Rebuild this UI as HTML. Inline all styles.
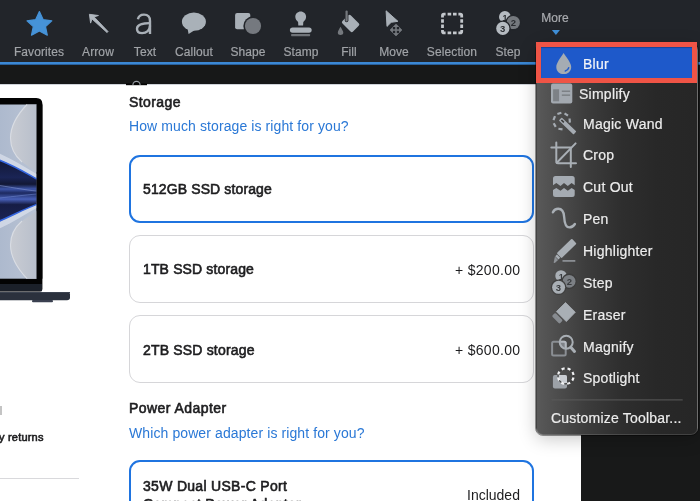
<!DOCTYPE html>
<html><head><meta charset="utf-8">
<style>
*{margin:0;padding:0;box-sizing:border-box}
html,body{width:700px;height:501px;overflow:hidden;background:#181919;font-family:"Liberation Sans",sans-serif;position:relative}
.abs{position:absolute}
.lbl,.t,.mi,svg{will-change:transform}
#toolbar{left:0;top:0;width:700px;height:62px;background:#22252a}
#blueline{left:0;top:62px;width:700px;height:3px;background:linear-gradient(#3b88d4 0,#3b88d4 2px,#29609a 2px,#29609a 3px)}
#strip{left:0;top:65px;width:700px;height:19px;background:#171818}
#page{left:0;top:84px;width:581px;height:417px;background:#fff;overflow:hidden}
.lbl{position:absolute;top:45.5px;font-size:12px;line-height:12px;color:#a0a3a7;letter-spacing:0.1px;white-space:nowrap;transform:translateX(-50%);-webkit-text-stroke:0.2px currentColor}
.t{position:absolute;white-space:nowrap;font-size:14px;line-height:14px;color:#1d1d1f}
.b{font-weight:normal;-webkit-text-stroke:0.6px currentColor}
.lnk{color:#2a78d6;letter-spacing:0.1px}
.card{position:absolute;left:129px;width:405px;height:68px;border:1px solid #d6d6d9;border-radius:11px;background:#fff}
.card.sel{border:2px solid #1f74e0}
#menu{left:536px;top:42.5px;width:162px;height:392.5px;border-radius:7px;background:linear-gradient(to right,#595959 0px,#4d4d4d 20px,#3c3c3c 50px,#2e2e2e 85px,#282828 120px,#262626 162px);box-shadow:0 4px 18px rgba(0,0,0,.22);border:1px solid rgba(255,255,255,.13);outline:0.5px solid rgba(0,0,0,.4)}
.mi{position:absolute;left:583px;font-size:14px;line-height:14px;color:#ececec;white-space:nowrap;letter-spacing:0.25px;-webkit-text-stroke:0.2px currentColor}
</style></head><body>
<div id="toolbar" class="abs"></div>
<div id="blueline" class="abs"></div>
<div id="strip" class="abs"></div>

<!-- toolbar icons -->
<svg class="abs" style="left:0;top:0" width="700" height="62" viewBox="0 0 700 62">
  <!-- star -->
  <polygon fill="#4693d8" stroke="#4693d8" stroke-width="1.2" stroke-linejoin="round" points="39.4,11.6 43.2,19.7 51.8,20.8 45.5,26.6 47.3,35.2 39.4,31 31.5,35.2 33.3,26.6 27,20.8 35.6,19.7"/>
  <!-- arrow -->
  <path d="M89.4,14.3 L98.45,15.5 L94.1,16.9 L108,31.5 L107.1,32.6 L92,19 L90.6,23.1 Z" fill="#b1b8bf" stroke="#b1b8bf" stroke-width="0.9" stroke-linejoin="round"/>
  <!-- text a -->
  <g fill="none" stroke="#a9b0b7" stroke-width="2.4">
    <path d="M137.9,19.3 C138.6,15.6 141.1,14.6 144,14.6 C147.8,14.6 150,16.7 150,20.9 L150,34"/>
    <path d="M150,23.1 C145.5,23.3 137,23.4 137,28.7 C137,31.7 139.2,33.1 142.1,33.1 C146.6,33.1 150,30 150,25.8"/>
  </g>
  <!-- callout -->
  <g fill="#a9b1b8">
    <ellipse cx="193.9" cy="21.7" rx="12" ry="9.1"/>
    <path d="M187.5,28.5 L188.6,34 L194.5,30.2 Z"/>
  </g>
  <!-- shape -->
  <rect x="235.1" y="12.9" width="15.2" height="16.3" rx="2" fill="#a9b0b7"/>
  <circle cx="253" cy="26" r="9.7" fill="#22252a"/>
  <circle cx="253" cy="26" r="8.1" fill="#75797f"/>
  <!-- stamp -->
  <g fill="#a9b0b7">
    <path d="M300.7,11.4 C303.7,11.4 306.1,13.8 306.1,16.8 C306.1,19 304.9,20.6 303.3,21.9 L303.1,25.4 L298.3,25.4 L298.1,21.9 C296.5,20.6 295.3,19 295.3,16.8 C295.3,13.8 297.7,11.4 300.7,11.4 Z"/>
    <rect x="289.9" y="27.4" width="21.8" height="5.4" rx="2.7"/>
  </g>
  <rect x="291.1" y="33.9" width="19" height="2.3" rx="0.6" fill="#6f7378"/>
  <!-- fill -->
  <g transform="translate(350.6,23.4) rotate(44.7)">
    <rect x="-7.45" y="-5.85" width="14.9" height="11.7" rx="1.8" fill="#a9b0b7"/>
  </g>
  <path d="M346.6,11.6 L346.6,20.4" stroke="#22252a" stroke-width="3.6" stroke-linecap="round" fill="none"/>
  <path d="M346.6,11.6 L346.6,20.4" stroke="#74787d" stroke-width="2.2" stroke-linecap="round" fill="none"/>
  <path d="M340.5,26.8 C339.4,29 337.8,31 337.8,32.8 C337.8,34.2 339,35 340.5,35 C342,35 343.3,34.2 343.3,32.8 C343.3,31 341.6,29 340.5,26.8 Z" fill="#75797e"/>
  <!-- move -->
  <path d="M386.1,10.8 L397.9,21.3 L391.2,22.3 L387,26.4 Z" fill="#a9b0b7" stroke="#a9b0b7" stroke-width="1" stroke-linejoin="round"/>
  <path d="M396,23.3 L402.6,30 L396,36.6 L389.4,30 Z" fill="#22252a"/>
  <path d="M396,23.9 L402,30 L396,36 L390,30 Z" fill="#75797e" stroke="#75797e" stroke-width="0.6" stroke-linejoin="round"/>
  <g fill="#22252a">
    <rect x="392.9" y="27" width="2.3" height="2.3"/>
    <rect x="396.8" y="27" width="2.3" height="2.3"/>
    <rect x="392.9" y="30.8" width="2.3" height="2.3"/>
    <rect x="396.8" y="30.8" width="2.3" height="2.3"/>
  </g>
  <!-- selection -->
  <g fill="none" stroke="#c3c7cc" stroke-width="2.8">
    <path d="M442.5,17.6 L442.5,15.6 Q442.5,14.2 443.9,14.2 L445.6,14.2"/>
    <path d="M458.4,14.2 L460.3,14.2 Q461.7,14.2 461.7,15.6 L461.7,17.6"/>
    <path d="M442.5,30 L442.5,31.4 Q442.5,32.8 443.9,32.8 L445.6,32.8"/>
    <path d="M458.4,32.8 L460.3,32.8 Q461.7,32.8 461.7,31.4 L461.7,30"/>
    <path d="M447.6,14.2 L451.2,14.2 M453,14.2 L456.6,14.2"/>
    <path d="M447.6,32.8 L451.2,32.8 M453,32.8 L456.6,32.8"/>
    <path d="M442.5,19.3 L442.5,22.7 M442.5,24.5 L442.5,28.1"/>
    <path d="M461.7,19.3 L461.7,22.7 M461.7,24.5 L461.7,28.1"/>
  </g>
  <!-- step -->
  <circle cx="504.9" cy="16.9" r="5.9" fill="#b5bbc1"/>
  <text x="505.1" y="21.2" font-size="9" font-family="Liberation Sans" font-weight="bold" fill="#2a2d31" text-anchor="middle">1</text>
  <circle cx="513.3" cy="22.5" r="7.9" fill="#22252a"/>
  <circle cx="513.3" cy="22.5" r="6.6" fill="#75797e"/>
  <circle cx="502.8" cy="28.4" r="7.9" fill="#22252a"/>
  <circle cx="502.8" cy="28.4" r="6.6" fill="#b5bbc1"/>
  <g font-family="Liberation Sans" font-weight="bold" fill="#2a2d31" text-anchor="middle">
    <text x="513.5" y="26" font-size="9.5">2</text>
    <text x="502.6" y="31.8" font-size="9.5">3</text>
  </g>
  <!-- more triangle -->
  <path d="M551.9,30 L559.9,30 L555.9,35 Z" fill="#3f8fd8"/>
</svg>

<div class="lbl" style="left:39.3px">Favorites</div>
<div class="lbl" style="left:98px">Arrow</div>
<div class="lbl" style="left:144.7px">Text</div>
<div class="lbl" style="left:193.8px">Callout</div>
<div class="lbl" style="left:247.8px">Shape</div>
<div class="lbl" style="left:300.5px">Stamp</div>
<div class="lbl" style="left:348.5px">Fill</div>
<div class="lbl" style="left:393.7px">Move</div>
<div class="lbl" style="left:452px">Selection</div>
<div class="lbl" style="left:508.4px">Step</div>
<div class="lbl" style="left:555.4px;top:11.7px;color:#a9abaf">More</div>

<!-- page -->
<div id="page" class="abs"></div>
<div class="abs" style="left:0;top:84px;width:581px;height:1px;background:#cfd3d9"></div>
<svg class="abs" style="left:120px;top:76px" width="35" height="12" viewBox="120 76 35 12">
  <rect x="126" y="83.4" width="21" height="1.8" fill="#050505"/>
  <path d="M132.9,85 A3.6,3.6 0 0 1 140.1,85" fill="#050505" stroke="#9ba1a8" stroke-width="1.1"/>
</svg>

<!-- laptop -->
<svg class="abs" style="left:0;top:84px" width="100" height="230" viewBox="0 84 100 230">
  <defs>
    <linearGradient id="scrL" x1="0" y1="0" x2="1" y2="0">
      <stop offset="0" stop-color="#aab7cc"/>
      <stop offset="1" stop-color="#b9c3d4"/>
    </linearGradient>
    <linearGradient id="scrR" x1="0" y1="0" x2="1" y2="0">
      <stop offset="0" stop-color="#c9ccd3"/>
      <stop offset="1" stop-color="#b8bfcb"/>
    </linearGradient>
    <linearGradient id="navy" x1="0" y1="0" x2="0" y2="1">
      <stop offset="0" stop-color="#2d5bd0"/>
      <stop offset="0.07" stop-color="#131938"/>
      <stop offset="0.3" stop-color="#1a2455"/>
      <stop offset="0.4" stop-color="#121835"/>
      <stop offset="0.47" stop-color="#3d55a8"/>
      <stop offset="0.53" stop-color="#1d2a60"/>
      <stop offset="0.62" stop-color="#4860b8"/>
      <stop offset="0.7" stop-color="#161d45"/>
      <stop offset="0.9" stop-color="#1a2250"/>
      <stop offset="1" stop-color="#2d5bd0"/>
    </linearGradient>
  </defs>
  <path d="M-10,98 L36.3,98 Q42.4,98 42.4,104.1 L42.4,289 Q42.4,291.5 40,291.5 L-10,291.5 Z" fill="#030303"/>
  <rect x="-10" y="104.5" width="46.6" height="174.2" fill="url(#scrL)"/>
  <path d="M27,104.5 C16,116 10.5,126 10.5,138 C10.5,148 15,156 22,162 L36.6,172 L36.6,104.5 Z" fill="url(#scrR)"/>
  <path d="M27,278.7 C16,267 10.5,257 10.5,245 C10.5,235 15,227 22,221 L36.6,211 L36.6,278.7 Z" fill="url(#scrR)"/>
  <path d="M27,104.5 C16,116 10.5,126 10.5,138 C10.5,148 15,156 22,162" stroke="#e2e4ea" stroke-width="1.1" fill="none" opacity="0.75"/>
  <path d="M27,278.7 C16,267 10.5,257 10.5,245 C10.5,235 15,227 22,221" stroke="#e2e4ea" stroke-width="1.1" fill="none" opacity="0.75"/>
  <path d="M-10,150 C8,156 22,166 36.6,174 L36.6,180 C22,172 8,162 -10,157 Z" fill="#dde2ee" opacity="0.7"/>
  <path d="M-10,232 C8,226 22,216 36.6,208 L36.6,202 C22,210 8,220 -10,225 Z" fill="#dde2ee" opacity="0.7"/>
  <path d="M-10,157 C8,162 24,172 36.6,179 L36.6,204.4 C24,209 8,218 -10,225 Z" fill="url(#navy)"/>
  <path d="M-10,157 C8,162 24,172 36.6,179" stroke="#3466e0" stroke-width="1.5" fill="none"/>
  <path d="M-10,225 C8,218 24,209 36.6,204.4" stroke="#3466e0" stroke-width="1.5" fill="none"/>
  <path d="M-10,184 C10,187 25,190 36.6,191" stroke="#8a9cd8" stroke-width="0.8" fill="none" opacity="0.7"/>
  <path d="M-10,199 C10,197 25,195 36.6,194" stroke="#6f86d0" stroke-width="0.8" fill="none" opacity="0.7"/>
  <rect x="36.6" y="104.5" width="5.8" height="174.2" fill="#030303"/>
  <rect x="-10" y="284" width="52" height="7.2" fill="#1b2029"/>
  <path d="M-10,292 L67.5,292 Q70,292 70,294.5 L70,297.5 Q70,300.3 67,300.3 L-10,300.3 Z" fill="#2b313d"/>
  <rect x="-10" y="292" width="80" height="1" fill="#3c4350"/>
  <rect x="32" y="300" width="21" height="2.2" rx="1" fill="#3a4050"/>
</svg>

<div class="abs" style="left:0;top:406px;width:1.5px;height:9px;background:#c4c4c4"></div>
<div class="t b" style="left:-1.5px;top:431.8px;font-size:11px;line-height:11px;letter-spacing:0.2px">y returns</div>
<div class="abs" style="left:0;top:478px;width:79px;height:1px;background:#d9d9dc"></div>

<div class="t b" style="left:129px;top:95.05px;letter-spacing:0.4px">Storage</div>
<div class="t lnk" style="left:129px;top:119.05px">How much storage is right for you?</div>

<div class="card sel" style="top:154.5px"></div>
<div class="t b" style="left:143px;top:182.25px;letter-spacing:0.12px">512GB SSD storage</div>

<div class="card" style="top:235px"></div>
<div class="t b" style="left:143px;top:262.35px;letter-spacing:0.14px">1TB SSD storage</div>
<div class="t" style="left:455px;top:262.85px;letter-spacing:0.3px">+ $200.00</div>

<div class="card" style="top:315px"></div>
<div class="t b" style="left:143px;top:342.95px;letter-spacing:0.18px">2TB SSD storage</div>
<div class="t" style="left:455px;top:342.65px;letter-spacing:0.3px">+ $600.00</div>

<div class="t b" style="left:129px;top:401.15px;letter-spacing:0.45px">Power Adapter</div>
<div class="t lnk" style="left:129px;top:425.75px">Which power adapter is right for you?</div>

<div class="card sel" style="top:459.6px;height:80px"></div>
<div class="t b" style="left:143px;top:479.3px;letter-spacing:0.3px">35W Dual USB-C Port</div>
<div class="t b" style="left:143px;top:496.5px;letter-spacing:0.3px">Compact Power Adapter</div>
<div class="t" style="left:466.5px;top:487.75px">Included</div>

<!-- menu -->
<div id="menu" class="abs"></div>
<div class="abs" style="left:536.2px;top:41.6px;width:160.5px;height:41.2px;border:5px solid #ef5446;background:#1e59ca;box-shadow:inset 0 1px 1px rgba(0,0,0,.25)"></div>

<svg class="abs" style="left:536px;top:41px" width="164" height="400" viewBox="536 41 164 400">
  <!-- blur drop -->
  <path d="M563.6,52.9 C560.8,57.5 556.3,62.6 556.3,66.9 C556.3,71.1 559.5,74.1 563.7,74.1 C567.9,74.1 571.2,71.1 571.2,66.9 C571.2,62.6 566.4,57.5 563.6,52.9 Z" fill="#a5acb3"/>
  <path d="M565.3,71 C566.9,70.6 568.3,69.3 568.7,67.8" stroke="#1f5bcc" stroke-width="1.4" stroke-linecap="round" fill="none"/>
  <!-- simplify -->
  <rect x="551" y="83.6" width="21.3" height="19.8" rx="2" fill="#a3a9b0"/>
  <rect x="553.1" y="89.3" width="6" height="12" fill="#7d8186"/>
  <rect x="561.8" y="90.5" width="8.3" height="1.5" fill="#7d8186"/>
  <rect x="561.8" y="94.4" width="8.3" height="1.5" fill="#7d8186"/>
  <!-- magic wand -->
  <path d="M569.57,118.47 L569.86,122.61 M562.52,129.36 L558.41,128.72 M555.75,126.89 L553.69,123.28 M553.47,120.06 L555.00,116.20 M557.38,114.01 L561.36,112.81 M564.55,113.30 L567.97,115.66" stroke="#a5abb2" stroke-width="2.2" fill="none"/>
  <g transform="translate(567.6,126) rotate(43.8)">
    <rect x="-10.2" y="-2.1" width="20.4" height="4.2" rx="0.8" fill="#a5abb2"/>
    <rect x="-8.6" y="-0.8" width="3.4" height="1.6" fill="#3a3a3a"/>
  </g>
  <!-- crop -->
  <g stroke="#a9afb5" stroke-width="2" fill="none" stroke-linecap="round" stroke-linejoin="round">
    <path d="M556.3,142.6 L556.3,161.6 Q556.3,163.3 558,163.3 L576,163.3"/>
    <path d="M551.3,147.5 L570.8,147.5 L570.8,167"/>
    <path d="M556.8,162.8 L575.6,143.4"/>
  </g>
  <!-- cut out -->
  <path d="M555.5,176.1 L572.2,176.1 Q574.7,176.1 574.7,178.6 L574.7,185.3 L571.6,183.1 L567.8,186 L564,183.1 L560.5,186 L556.3,183.1 L553,185.3 L553,178.6 Q553,176.1 555.5,176.1 Z" fill="#a5abb2"/>
  <path d="M553,190.1 L556.3,187.9 L560.5,190.8 L564,187.9 L567.8,190.8 L571.6,187.9 L574.7,190.1 L574.7,194.6 Q574.7,197.1 572.2,197.1 L555.5,197.1 Q553,197.1 553,194.6 Z" fill="#a5abb2"/>
  <!-- pen -->
  <path d="M552.9,212.3 C554,210 556,208.8 558.2,208.8 C562.2,208.8 563.9,212.2 564.2,217.2 C564.5,223 566.2,227.4 569.3,227.4 C571.6,227.4 573.6,226 574.9,224" stroke="#a9afb5" stroke-width="2.4" fill="none" stroke-linecap="round"/>
  <!-- highlighter -->
  <g transform="translate(566.6,248.5) rotate(-44)">
    <rect x="-10.4" y="-3.5" width="21" height="7" rx="1" fill="#a9afb5"/>
    <rect x="-13.6" y="-2.3" width="2.5" height="4.6" fill="#a9afb5"/>
    <path d="M-14,-2.3 L-19.2,1.2 L-18.6,2.3 L-14,2.3 Z" fill="#8e9297"/>
  </g>
  <rect x="562.5" y="260" width="12.8" height="1.8" fill="#8a8e93"/>
    <!-- step -->
  <circle cx="561" cy="275.9" r="5.7" fill="#a9afb5"/>
  <text x="561.2" y="280" font-size="9" font-family="Liberation Sans" font-weight="bold" fill="#3a3c3f" text-anchor="middle">1</text>
  <circle cx="569.1" cy="281.3" r="7.7" fill="#3d3d3d"/>
  <circle cx="569.1" cy="281.3" r="6.4" fill="#7c8085"/>
  <circle cx="558.6" cy="287.3" r="7.8" fill="#3f3f3f"/>
  <circle cx="558.6" cy="287.3" r="6.5" fill="#a9afb5"/>
  <g font-family="Liberation Sans" font-weight="bold" fill="#3a3c3f" text-anchor="middle">
    <text x="569.3" y="284.6" font-size="9.5">2</text>
    <text x="558.4" y="290.7" font-size="9.5">3</text>
  </g>
  <!-- eraser -->
  <path d="M565.5,302.5 L575.3,312.2 L566.3,321.6 L556.4,311.6 Z" fill="#a9afb5" stroke="#a9afb5" stroke-width="0.8" stroke-linejoin="round"/>
  <g transform="translate(556.2,311.5) rotate(45)">
    <rect x="0.2" y="1.6" width="10.8" height="4.8" rx="1.2" fill="#878b90"/>
  </g>
  <!-- magnify -->
  <defs><clipPath id="mgc"><circle cx="566.2" cy="342.2" r="6"/></clipPath></defs>
  <rect x="552.1" y="341.8" width="13.6" height="13.8" rx="1.5" fill="none" stroke="#8a8e93" stroke-width="2"/>
  <g clip-path="url(#mgc)">
    <rect x="552.1" y="341.8" width="13.6" height="13.8" rx="1.5" fill="#7f8388" stroke="#b3b8be" stroke-width="2"/>
  </g>
  <circle cx="566.2" cy="342.2" r="6.5" fill="none" stroke="#a9afb5" stroke-width="2"/>
  <path d="M571,347.4 L574.5,351.4" stroke="#a9afb5" stroke-width="3" stroke-linecap="round"/>
  <!-- spotlight -->
  <defs><clipPath id="spc"><circle cx="565.8" cy="376.1" r="7.8"/></clipPath></defs>
  <rect x="552.9" y="374.9" width="14.1" height="13.7" rx="2" fill="#9ca1a7"/>
  <rect x="552.9" y="374.9" width="14.1" height="13.7" rx="2" fill="#c9cdd2" clip-path="url(#spc)"/>
  <circle cx="565.8" cy="376.1" r="7.8" fill="none" stroke="#3a3a3a" stroke-width="1.2"/>
  <circle cx="565.8" cy="376.1" r="7.8" fill="none" stroke="#f0f1f3" stroke-width="2.2" stroke-dasharray="3.2 2.93" stroke-dashoffset="4.66"/>
  <!-- separator -->
  <rect x="551.4" y="399.4" width="131.3" height="1" fill="#5a5a5a"/>
</svg>

<div class="mi" style="top:56.75px;color:#f2f4f8">Blur</div>
<div class="mi" style="left:579px;top:86.85px">Simplify</div>
<div class="mi" style="top:116.75px">Magic Wand</div>
<div class="mi" style="top:148.35px">Crop</div>
<div class="mi" style="top:180.05px">Cut Out</div>
<div class="mi" style="top:212.15px">Pen</div>
<div class="mi" style="top:243.75px">Highlighter</div>
<div class="mi" style="top:276.15px">Step</div>
<div class="mi" style="top:307.65px">Eraser</div>
<div class="mi" style="top:339.65px">Magnify</div>
<div class="mi" style="top:371.15px">Spotlight</div>
<div class="mi" style="left:551px;top:411.35px;letter-spacing:0.2px">Customize Toolbar...</div>
</body></html>
